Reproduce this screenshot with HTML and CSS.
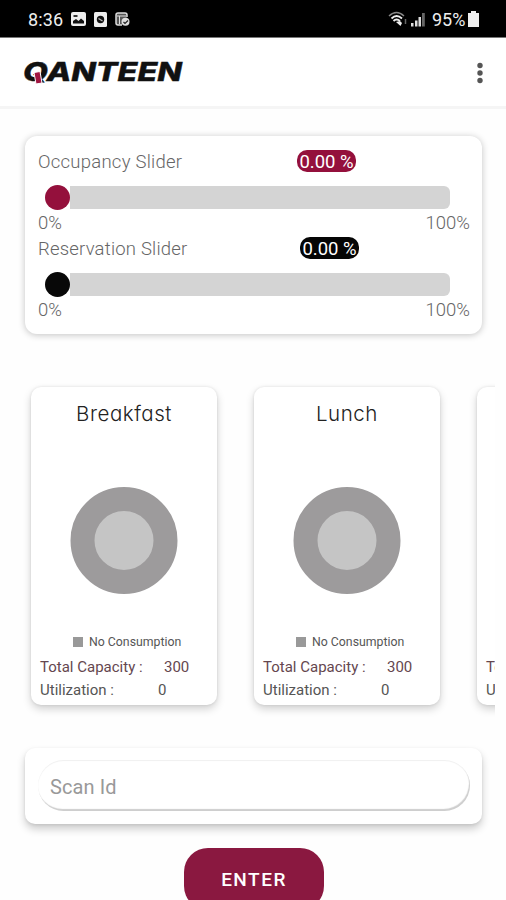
FILE: index.html
```html
<!DOCTYPE html>
<html lang="en">
<head>
<meta charset="utf-8">
<meta name="viewport" content="width=device-width, initial-scale=1">
<title>Qanteen</title>
<link rel="stylesheet" href="styles.css">
</head>
<body>
<div class="status">
  <div class="status-left">
    <span class="clock">8:36</span>
    <svg width="15" height="14" viewBox="0 0 15 14"><rect width="15" height="14" rx="2" fill="#eee"/><path d="M2 11.500V9l3-2 2.500 2L10 6.500l3 2.500v2.500z" fill="#111"/><rect x="2.500" y="3" width="4" height="2" fill="#333"/></svg>
    <svg width="13" height="15" viewBox="0 0 13 15"><rect width="13" height="15" rx="1.500" fill="#eee"/><circle cx="6.500" cy="7.500" r="3.700" fill="#111"/><path d="M4.500 6.500l4 2.500" stroke="#bbb" stroke-width="1.300"/></svg>
    <svg width="15" height="15" viewBox="0 0 15 15"><path d="M7 13H3a2 2 0 0 1-2-2V3a2 2 0 0 1 2-2h7a2 2 0 0 1 2 2v2" fill="#555" stroke="#ddd" stroke-width="1.500"/><path d="M2 4h9M4.500 4v8" stroke="#ddd"/><circle cx="10.500" cy="9.800" r="4" fill="#ddd"/><path d="M8.500 10l1.500 1.500 3-3" fill="none" stroke="#222" stroke-width="1.200"/></svg>
  </div>
  <div class="status-right">
    <svg width="19" height="16" viewBox="0 0 19 16" fill="none"><path d="M1 5Q8.500-2 16 5" stroke="#888" stroke-width="1.500"/><path d="M3.500 7.500Q8.500 2.500 14 7.500M5.500 10Q8.500 7 12 10" stroke="#eee" stroke-width="1.800"/><path d="M8 11l4-1 2 2-1.500 3z" fill="#eee"/><path d="M17.500 8v5" stroke="#666" stroke-width="1.500"/></svg>
    <svg class="signal" width="15" height="15" viewBox="0 0 15 15"><path d="M0 11h2.500v3.500H0zM4 8.500h2.500v6H4zM7.500 5H10v9.500H7.500z" fill="#ddd"/><path d="M11 1h2.800v13.500H11z" fill="#666"/></svg>
    <span class="percent">95%</span>
    <svg width="11" height="16" viewBox="0 0 11 16"><path d="M3 0h5v2h3v14H0V2h3z" fill="#eee"/></svg>
  </div>
</div>
<header class="appbar">
  <svg class="logo" width="164" height="30" viewBox="0 0 164 30">
    <text x="1" y="22.500" class="logo-text" textLength="159" lengthAdjust="spacingAndGlyphs">QANTEEN</text>
    <path d="M12 14.500l6-1 2 11.500-6 1z" fill="#a01540" stroke="#fff" stroke-width="1"/>
  </svg>
  <svg class="more" width="8" height="22" viewBox="0 0 8 22" fill="#555"><circle cx="4" cy="3.500" r="2.700"/><circle cx="4" cy="11" r="2.700"/><circle cx="4" cy="18.500" r="2.700"/></svg>
</header>
<main>
  <section class="sliders">
    <div class="slider">
      <div class="slider-head"><span class="occ">Occupancy Slider</span><b class="pill">0.00 %</b></div>
      <div class="track"><i class="thumb"></i><i class="bar"></i></div>
      <div class="range"><span>0%</span><span>100%</span></div>
    </div>
    <div class="slider black">
      <div class="slider-head"><span class="res">Reservation Slider</span><b class="pill">0.00 %</b></div>
      <div class="track"><i class="thumb"></i><i class="bar"></i></div>
      <div class="range"><span>0%</span><span>100%</span></div>
    </div>
  </section>
  <section class="meals">
    <article class="meal">
      <h2>Breakfast</h2>
      <div class="donut"></div>
      <div class="legend"><i></i><span>No Consumption</span></div>
      <div class="stat total"><span>Total Capacity :</span><span>300</span></div>
      <div class="stat util"><span>Utilization :</span><span>0</span></div>
    </article>
    <article class="meal">
      <h2>Lunch</h2>
      <div class="donut"></div>
      <div class="legend"><i></i><span>No Consumption</span></div>
      <div class="stat total"><span>Total Capacity :</span><span>300</span></div>
      <div class="stat util"><span>Utilization :</span><span>0</span></div>
    </article>
    <article class="meal">
      <h2></h2>
      <div class="donut"></div>
      <div class="legend"></div>
      <div class="stat total"><span>Total Capacity :</span></div>
      <div class="stat util"><span>Utilization :</span></div>
    </article>
  </section>
  <section class="scan"><div class="field">Scan Id</div></section>
  <button class="enter">ENTER</button>
</main>
</body>
</html>
```
FILE: styles.css
```css
* { box-sizing: border-box; }
html { height: 100%; overflow: hidden; }
body { margin: 0; height: 900px; overflow: hidden; background: #fefefe; font-family: Roboto, "Liberation Sans", sans-serif; color: #777; }
svg { display: block; flex: none; overflow: visible; }
.status { height: 38px; background: #000; border-bottom: 1px solid #777; padding: 1px 27px 0 28px; display: flex; justify-content: space-between; align-items: center; color: #eee; font-size: 18px; }
.status-left { display: flex; align-items: center; gap: 8px; }
.clock { width: 35px; letter-spacing: 0.1px; }
.status-right { display: flex; align-items: center; }
.signal { margin: 0 6px 0 4px; }
.percent { letter-spacing: 0; width: 36px; }
.appbar { height: 71px; background: #fff; border-bottom: 3px solid #f5f5f5; display: flex; justify-content: space-between; padding: 20px 22px 0 22px; }
.more { margin-top: 4px; }
.logo-text { font: italic 800 26px Inter, sans-serif; fill: #111; stroke: #111; stroke-width: .4px; }
.sliders { margin: 27px 24px 0 25px; height: 198px; background: #fff; border-radius: 12px; box-shadow: 0 1px 7px rgba(0,0,0,.24); padding: 13px 12px 0 13px; }
.slider { height: 87px; font-weight: 300; font-size: 18.500px; color: #666; }
.slider-head { height: 25px; display: flex; align-items: center; white-space: nowrap; }
.slider-head span { width: 259px; }
.occ { letter-spacing: .25px; }
.res { letter-spacing: .2px; }
.pill { width: 59px; height: 22px; border-radius: 10px; background: #94103c; color: #fff; font-size: 18.500px; font-weight: 400; line-height: 25px; text-align: center; position: relative; top: -1px; }
.black .pill { margin-left: 3px; background: #050505; }
.track { height: 25px; margin: 11px 20px 0 7px; display: flex; align-items: center; }
.thumb { width: 25px; height: 25px; border-radius: 50%; background: #94103c; }
.black .thumb { background: #080808; }
.bar { flex: 1; height: 23px; background: #d4d4d4; border-radius: 0 6px 6px 0; }
.range { height: 26px; display: flex; justify-content: space-between; align-items: center; }
.meals { margin-top: 43px; height: 360px; width: 495px; overflow: hidden; display: flex; gap: 37px; padding: 10px 0 0 31px; }
.meal { flex: 0 0 186px; height: 318px; background: #fff; border-radius: 10px; box-shadow: 0 4px 8px rgba(0,0,0,.18), 0 0 3px rgba(0,0,0,.1); color: #555; }
.meal h2 { margin: 0; height: 54px; text-align: center; font: 300 20.500px/54px Inter, sans-serif; letter-spacing: .55px; font-feature-settings: "cv11"; color: #222; }
.donut { width: 107px; height: 107px; margin: 46px auto 0; border-radius: 50%; border: 24px solid #9d9b9c; background: #c5c5c5; }
.meal .donut { transform: translateX(-.5px); }
.legend { height: 24px; margin: 36px 0 0 42px; display: flex; align-items: center; gap: 6px; font-size: 12.300px; white-space: nowrap; }
.legend i { width: 10px; height: 10px; background: #999; }
.stat { display: flex; align-items: center; padding-left: 9px; height: 23px; font-size: 15px; white-space: nowrap; }
.total { height: 24px; padding-top: 1px; color: #65474f; }
.stat span:first-child { width: 124px; letter-spacing: 0; }
.util span:first-child { width: 118px; }
.scan { margin: 11px 24px 0 25px; height: 76px; background: #fff; border-radius: 10px; padding: 12px 12px 0 13px; box-shadow: 0 5px 8px rgba(0,0,0,.2), 0 1px 3px rgba(0,0,0,.08); }
.field { height: 51px; border-radius: 26px; padding-left: 12px; line-height: 54px; font-size: 20px; color: #999; letter-spacing: .1px; box-shadow: inset -1px -2px 1px #cecece, inset 0 1px 1px #f0f0f0; }
.enter { display: block; margin: 24px 0 0 184px; width: 140px; height: 62px; border: 0; padding: 0; border-radius: 24px; background: #8a1840; color: #fff; font: 500 19px Roboto, sans-serif; letter-spacing: 1.500px; }
```
